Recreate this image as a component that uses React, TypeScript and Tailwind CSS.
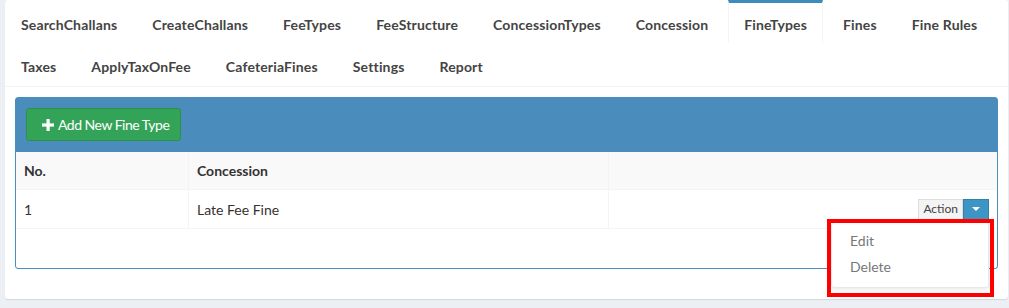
import React from "react";

const tabsRow1 = [
  "SearchChallans",
  "CreateChallans",
  "FeeTypes",
  "FeeStructure",
  "ConcessionTypes",
  "Concession",
  "FineTypes",
  "Fines",
  "Fine Rules",
];
const tabsRow2 = ["Taxes", "ApplyTaxOnFee", "CafeteriaFines", "Settings", "Report"];

function Tab({ label, top }: { label: string; top?: boolean }) {
  const active = label === "FineTypes";
  return (
    <li className="mr-[5px]">
      <a
        className={
          "block h-[43px] border-t-[3px] px-[15px] text-[14px] leading-[20px] font-bold tracking-[0.15px] text-[#444] " +
          (top ? "pt-[12px] " : "pt-[11px] ") +
          (active
            ? "border-x border-t-[#3c8dbc] border-x-[#f4f4f4] bg-white"
            : "border-t-transparent")
        }
      >
        {label}
      </a>
    </li>
  );
}

export default function App() {
  return (
    <div
      className="min-h-[308px] w-full bg-[#ecf0f5] text-[#333]"
      style={{ fontFamily: "Lato, 'Liberation Sans', sans-serif" }}
    >
      <div className="ml-[5px] w-[1003px] rounded-[3px] bg-white shadow-[0_1px_1px_rgba(0,0,0,0.1)]">
        <div className="border-b border-[#f4f4f4] pl-px">
          <ul className="flex flex-wrap">
            {tabsRow1.map((t) => (
              <Tab key={t} label={t} top />
            ))}
          </ul>
          <ul className="flex flex-wrap">
            {tabsRow2.map((t) => (
              <Tab key={t} label={t} />
            ))}
          </ul>
        </div>

        <div className="p-[10px] pb-[30px]">
          <div className="relative rounded-[3px] border border-[#4a8dbd]">
            <div className="bg-[#4a8dbd] p-[10px] pb-[11px]">
              <button className="flex h-[33px] items-center gap-[4px] rounded-[3px] border border-[#2e8f4c] bg-[#33a457] pr-[11px] pl-[15px] text-[14px] tracking-[-0.5px] text-white">
                <svg width="12" height="12" viewBox="0 0 12 12" fill="white">
                  <rect x="4.5" y="0" width="3.2" height="12" />
                  <rect x="0" y="4.4" width="12" height="3.2" />
                </svg>
                Add New Fine Type
              </button>
            </div>

            <div className="pb-[39px]">
              <div className="flex h-[38px] border-b border-[#f4f4f4] bg-[#f9f9f9] text-[14px] font-bold">
                <div className="flex w-[173px] items-center border-r border-[#f4f4f4] px-[8px]">No.</div>
                <div className="flex w-[420px] items-center border-r border-[#f4f4f4] px-[8px]">Concession</div>
                <div className="flex-1" />
              </div>
              <div className="flex h-[39px] border-b border-[#f4f4f4] text-[14px]">
                <div className="flex w-[173px] items-center border-r border-[#f4f4f4] px-[8px]">1</div>
                <div className="flex w-[420px] items-center border-r border-[#f4f4f4] px-[8px]">Late Fee Fine</div>
                <div className="flex flex-1 items-center justify-end pr-[8px]">
                  <div className="relative flex h-[21px]">
                    <span className="flex items-center border border-[#ddd] bg-[#f4f4f4] px-[4px] text-[12px] text-[#444]">
                      Action
                    </span>
                    <span className="flex w-[26px] items-center justify-center border border-[#367fa9] bg-[#3c95c4]">
                      <svg width="8" height="4" viewBox="0 0 8 4" fill="white">
                        <path d="M0 0h8L4 4z" />
                      </svg>
                    </span>
                    <div className="absolute top-[23px] right-0 w-[158px] rounded-[3px] border border-[#e8e8e8] bg-white pt-[5px] pb-[7px] text-[14px] text-[#777] shadow-[0_2px_4px_rgba(0,0,0,0.08)]">
                      <div className="px-[18px] py-[3px] leading-[20px]">Edit</div>
                      <div className="px-[18px] py-[3px] leading-[20px]">Delete</div>
                    </div>
                    <div className="pointer-events-none absolute top-[20px] right-[-5px] h-[78px] w-[167px] border-[4px] border-[#ff0000]" />
                  </div>
                </div>
              </div>
            </div>
          </div>
        </div>
      </div>
    </div>
  );
}
